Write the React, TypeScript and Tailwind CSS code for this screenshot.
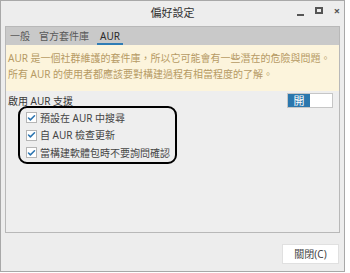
import { Check } from "lucide-react";

const font = { fontFamily: '"Noto Sans", "Noto Sans CJK TC", sans-serif' };

function Row({ label }: { label: string }) {
  return (
    <div className="flex items-center gap-[3px] h-[17.5px]">
      <span className="w-[11px] h-[11px] shrink-0 bg-white border border-[#b5b5b5] flex items-center justify-center">
        <Check className="w-[10px] h-[10px] text-[#2b74b0]" strokeWidth={4} />
      </span>
      <span className="text-[10px] leading-none whitespace-nowrap text-[#444]">{label}</span>
    </div>
  );
}

export default function App() {
  return (
    <div className="w-[350px] h-[273px] bg-white" style={font}>
      <div className="w-[345px] h-[272px] bg-[#ededed] border border-[#a8a8a8] flex flex-col">
        <div className="h-[22px] flex items-center relative">
          <div className="flex-1 text-center text-[11px] leading-none text-[#333]">偏好設定</div>
          <div className="absolute right-[4px] top-[4px] flex items-center gap-[11px] text-[#555]">
            <span className="w-[7px] h-[2px] bg-[#555] mt-[8px]" />
            <span className="w-[8px] h-[7px] border-2 border-[#555]" />
            <span className="text-[11px] leading-none font-bold">×</span>
          </div>
        </div>

        <div className="mx-[4px] mt-[3px] h-[207px] border border-[#b8b8b8] flex flex-col">
          <div className="h-[18px] bg-[#c9c9c9] flex items-end gap-[7px] px-[3px] text-[10px] leading-none">
            <span className="text-[#5a5a5a] pb-[4px] px-[1px]">一般</span>
            <span className="text-[#5a5a5a] pb-[4px] px-[1px]">官方套件庫</span>
            <span className="text-[#2b2b2b] pb-[2px] px-[3px] border-b-2 border-[#2f7cb5]">AUR</span>
          </div>
          <div className="h-[46px] bg-[#fcf4dc] px-[2px] pt-[5px] text-[10px] leading-[16px] text-[#b69a64] whitespace-nowrap">
            <div>AUR 是一個社群維護的套件庫，所以它可能會有一些潛在的危險與問題。</div>
            <div>所有 AUR 的使用者都應該要對構建過程有相當程度的了解。</div>
          </div>
          <div className="flex-1 bg-[#eeeeee] px-[2px] pt-[2px]">
            <div className="flex items-center justify-between">
              <span className="text-[10px] leading-none text-[#3a3a3a] mt-[1px]">啟用 AUR 支援</span>
              <div className="flex w-[46px] h-[15px] mr-[4px] border border-[#c6c6c6]">
                <span className="w-[22px] bg-[#2b77ad] text-white text-[11px] leading-none flex items-center justify-center">開</span>
                <span className="flex-1 bg-white" />
              </div>
            </div>
            <div className="ml-[10px] -mt-[2px] w-[159px] h-[58px] border-2 border-black rounded-[9px] pl-[6px] pt-[1px] flex flex-col">
              <Row label="預設在 AUR 中搜尋" />
              <Row label="自 AUR 檢查更新" />
              <Row label="當構建軟體包時不要詢問確認" />
            </div>
          </div>
        </div>

        <div className="flex justify-end pr-[5px] pt-[11px]">
          <div className="w-[57px] h-[20px] bg-white border border-[#e0e0e0] text-[10px] leading-none text-[#444] flex items-center justify-center">關閉(C)</div>
        </div>
      </div>
    </div>
  );
}
